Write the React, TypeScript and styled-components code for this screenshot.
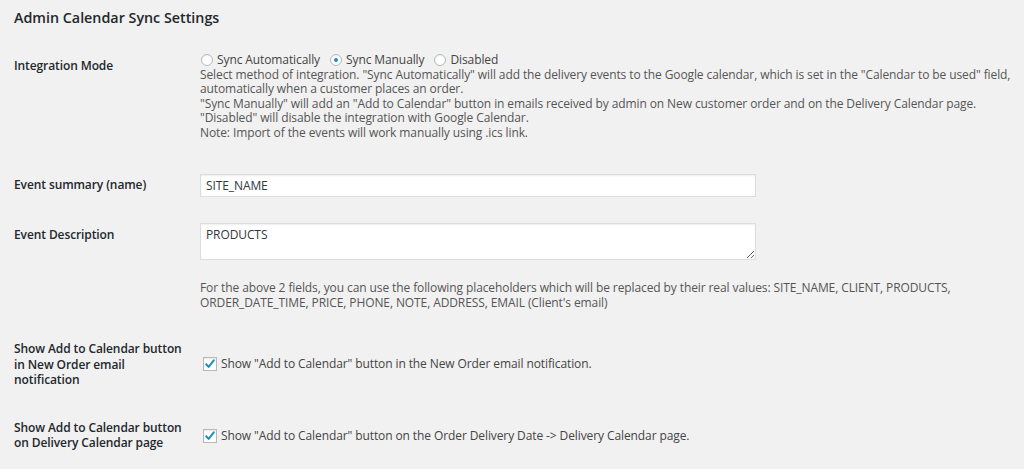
import styled, { createGlobalStyle } from "styled-components";

const GlobalStyle = createGlobalStyle`
  html, body {
    margin: 0;
    padding: 0;
    background: #f1f1f1;
  }
  body {
    font-family: "Open Sans", "Liberation Sans", sans-serif;
    font-size: 12px;
    letter-spacing: -0.1px;
    color: #444;
  }
`;

const Page = styled.div`
  width: 1024px;
  height: 469px;
  padding: 8px 14px 0 14px;
  box-sizing: border-box;
  overflow: hidden;
`;

const Title = styled.h2`
  margin: 0;
  font-size: 14.3px;
  font-weight: 600;
  letter-spacing: 0;
  line-height: 20px;
  color: #23282d;
`;

const Row = styled.div<{ $top: number }>`
  display: grid;
  grid-template-columns: 186px 1fr;
  align-items: start;
  margin-top: ${(p) => p.$top}px;
`;

const Label = styled.div<{ $offset?: number }>`
  font-weight: 600;
  color: #23282d;
  line-height: 15.5px;
  padding-top: ${(p) => p.$offset ?? 0}px;
`;

const Field = styled.div<{ $offset?: number }>`
  padding-top: ${(p) => p.$offset ?? 0}px;
  line-height: 14.5px;
  white-space: nowrap;
`;

const RadioGroup = styled.div`
  display: flex;
  align-items: center;
  gap: 9px;
  color: #444;
`;

const RadioOption = styled.label`
  display: flex;
  align-items: center;
  gap: 4px;
`;

const RadioCircle = styled.span<{ $checked?: boolean }>`
  width: 10px;
  height: 10px;
  border-radius: 50%;
  border: 1px solid #b4b9be;
  background: #fff;
  box-shadow: inset 0 1px 2px rgba(0, 0, 0, 0.07);
  display: inline-flex;
  align-items: center;
  justify-content: center;
  margin-left: 1px;

  &::after {
    content: "";
    width: 4px;
    height: 4px;
    border-radius: 50%;
    background: #1e8cbe;
    display: ${(p) => (p.$checked ? "block" : "none")};
  }
`;

const Description = styled.p`
  margin: 0;
  color: #555;
`;

const TextInput = styled.input`
  display: block;
  width: 556px;
  height: 23px;
  box-sizing: border-box;
  border: 1px solid #ddd;
  box-shadow: inset 0 1px 2px rgba(0, 0, 0, 0.07);
  background: #fff;
  color: #32373c;
  font: inherit;
  letter-spacing: -0.1px;
  padding: 0 5px;
  outline: none;
`;

const TextArea = styled.textarea`
  display: block;
  width: 556px;
  height: 37px;
  box-sizing: border-box;
  border: 1px solid #ddd;
  box-shadow: inset 0 1px 2px rgba(0, 0, 0, 0.07);
  background: #fff;
  color: #32373c;
  font: inherit;
  letter-spacing: -0.1px;
  line-height: 15px;
  padding: 3px 5px;
  outline: none;
`;

const CheckRow = styled.label`
  display: flex;
  align-items: center;
  gap: 4px;
  color: #444;
`;

const CheckBox = styled.span`
  width: 14px;
  height: 14px;
  box-sizing: border-box;
  border: 1px solid #b4b9be;
  background: #fff;
  box-shadow: inset 0 1px 2px rgba(0, 0, 0, 0.1);
  display: inline-flex;
  align-items: center;
  justify-content: center;
  margin-left: 3px;

  svg {
    width: 12px;
    height: 12px;
  }
`;

const Check = () => (
  <CheckBox>
    <svg viewBox="0 0 12 12">
      <path d="M2.2 6.3 L4.6 8.9 L9.8 2.4" fill="none" stroke="#1e8cbe" strokeWidth="2" strokeLinecap="round" strokeLinejoin="round" />
    </svg>
  </CheckBox>
);

export default function App() {
  return (
    <>
      <GlobalStyle />
      <Page>
        <Title>Admin Calendar Sync Settings</Title>

        <Row $top={25}>
          <Label $offset={5}>Integration Mode</Label>
          <Field>
            <RadioGroup>
              <RadioOption>
                <RadioCircle />
                Sync Automatically
              </RadioOption>
              <RadioOption>
                <RadioCircle $checked />
                Sync Manually
              </RadioOption>
              <RadioOption>
                <RadioCircle />
                Disabled
              </RadioOption>
            </RadioGroup>
            <Description>
              Select method of integration. "Sync Automatically" will add the delivery events to the Google calendar, which is set in the "Calendar to be used" field,
              <br />
              automatically when a customer places an order.
              <br />
              "Sync Manually" will add an "Add to Calendar" button in emails received by admin on New customer order and on the Delivery Calendar page.
              <br />
              "Disabled" will disable the integration with Google Calendar.
              <br />
              Note: Import of the events will work manually using .ics link.
            </Description>
          </Field>
        </Row>

        <Row $top={34}>
          <Label $offset={3}>Event summary (name)</Label>
          <Field>
            <TextInput defaultValue="SITE_NAME" />
          </Field>
        </Row>

        <Row $top={26}>
          <Label $offset={4}>Event Description</Label>
          <Field>
            <TextArea defaultValue="PRODUCTS" />
          </Field>
        </Row>

        <Row $top={21}>
          <Label />
          <Field>
            <Description>
              For the above 2 fields, you can use the following placeholders which will be replaced by their real values: SITE_NAME, CLIENT, PRODUCTS,
              <br />
              ORDER_DATE_TIME, PRICE, PHONE, NOTE, ADDRESS, EMAIL (Client's email)
            </Description>
          </Field>
        </Row>

        <Row $top={31}>
          <Label>
            Show Add to Calendar button
            <br />
            in New Order email
            <br />
            notification
          </Label>
          <Field $offset={16}>
            <CheckRow>
              <Check />
              Show "Add to Calendar" button in the New Order email notification.
            </CheckRow>
          </Field>
        </Row>

        <Row $top={32}>
          <Label>
            Show Add to Calendar button
            <br />
            on Delivery Calendar page
          </Label>
          <Field $offset={9}>
            <CheckRow>
              <Check />
              Show "Add to Calendar" button on the Order Delivery Date -&gt; Delivery Calendar page.
            </CheckRow>
          </Field>
        </Row>
      </Page>
    </>
  );
}
